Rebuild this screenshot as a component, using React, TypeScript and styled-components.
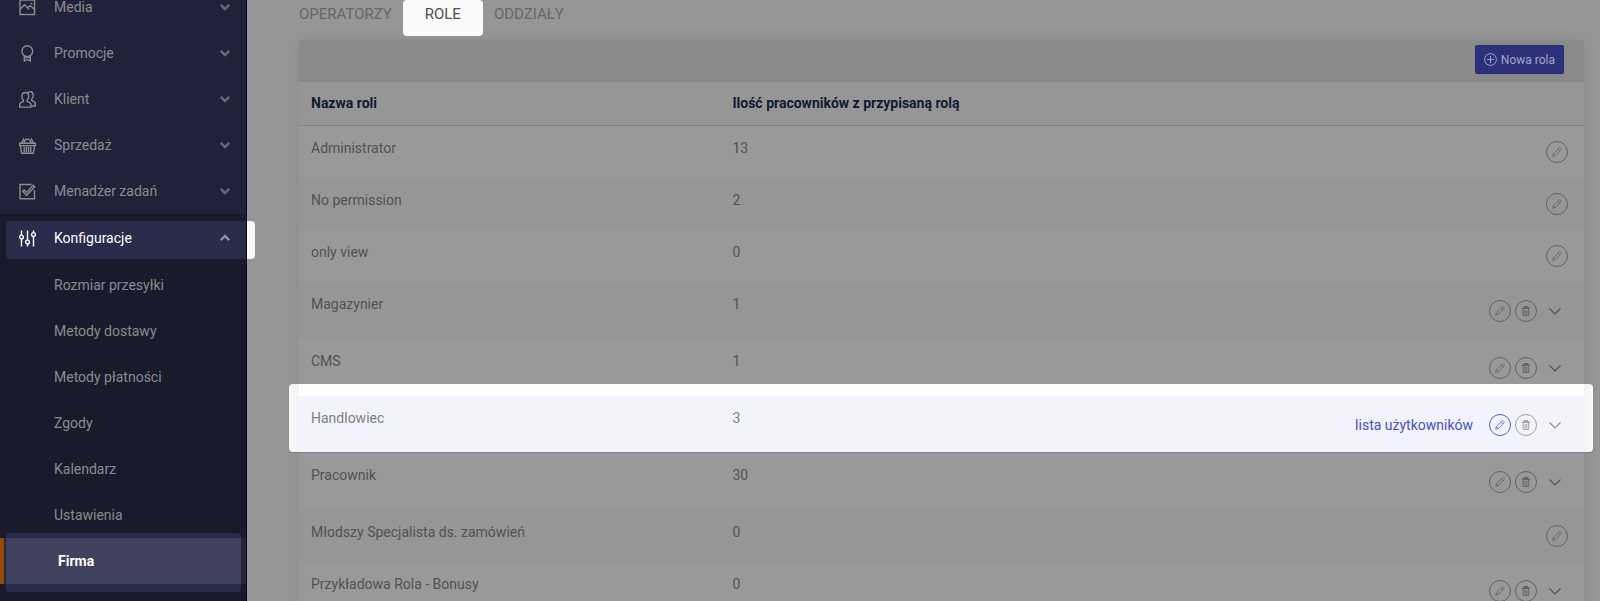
import React from "react";
import styled, { createGlobalStyle, css } from "styled-components";

const GlobalStyle = createGlobalStyle`
  *, *::before, *::after { box-sizing: border-box; }
  body {
    margin: 0;
    background: #969696;
    font-family: Roboto, "Liberation Sans", sans-serif;
    font-size: 14px;
    line-height: 20px;
  }
  button { font: inherit; border: 0; padding: 0; background: none; cursor: pointer; }
  a { text-decoration: none; }
  svg { display: block; flex: none; }
`;

/* ---------- layout ---------- */

const Shell = styled.div`
  display: grid;
  grid-template-columns: 247px minmax(0, 1fr);
  height: 100vh;
  overflow: hidden;
`;

const Sidebar = styled.aside`
  position: relative;
  z-index: 1;
  background: #202239;
  border-right: 1px solid #05052f;
`;

const Main = styled.main`
  padding: 0 16px 24px 52px;
`;

/* ---------- sidebar ---------- */

const Menu = styled.nav`
  margin-top: -16px;
  display: flex;
  flex-direction: column;
`;

const MenuButton = styled.button<{ $active?: boolean }>`
  position: relative;
  z-index: 0;
  display: flex;
  align-items: center;
  gap: 18px;
  width: 100%;
  height: 46px;
  padding: 0 16px 0 19px;
  text-align: left;
  color: ${(p) => (p.$active ? "#ffffff" : "#8b8c92")};

  ${(p) =>
    p.$active &&
    css`
      &::before {
        content: "";
        position: absolute;
        z-index: -1;
        inset: 6px -9px 2px 6px;
        border-radius: 4px;
        background: linear-gradient(to left, #fafafa 8px, #05052f 8px, #05052f 9px, #292c4b 9px);
      }
    `}
`;

const MenuLabel = styled.span`
  flex: 1;
`;

const MenuGroup = styled.div`
  padding: 1px 0 100vh;
  background: #191b2d;
`;

const SubMenu = styled.ul`
  list-style: none;
  margin: 0;
  padding: 1px 0 0;
`;

const SubLink = styled.a<{ $active?: boolean }>`
  position: relative;
  z-index: 0;
  display: flex;
  align-items: center;
  height: 46px;
  padding-left: 54px;
  color: #8b8b8d;

  ${(p) =>
    p.$active &&
    css`
      border-left: 4px solid #984c02;
      background: #26283a;
      color: #ffffff;
      font-weight: 700;

      &::before {
        content: "";
        position: absolute;
        z-index: -1;
        inset: -5px 5px -8px 2px;
        border-radius: 4px;
        background: linear-gradient(#292c4b 5px, #40425e 5px, #40425e 51px, #292c4b 51px);
      }
    `}
`;

/* ---------- tabs ---------- */

const Tabs = styled.nav`
  display: flex;
  gap: 11px;
  height: 36px;
  margin-bottom: 4px;
`;

const Tab = styled.a<{ $active?: boolean }>`
  padding: 4px ${(p) => (p.$active ? "22px" : "0")} 0;
  font-size: 15px;
  color: ${(p) => (p.$active ? "#505050" : "#676767")};
  background: ${(p) => (p.$active ? "#fafafa" : "transparent")};
  border-radius: 4px;
`;

/* ---------- table card ---------- */

const Card = styled.section`
  border-radius: 4px 4px 0 0;
  background: #999999;
  box-shadow: 0 0 14px rgba(60, 60, 70, 0.1);
`;

const Toolbar = styled.div`
  display: flex;
  justify-content: flex-end;
  align-items: flex-start;
  height: 42px;
  padding: 5px 20px 0;
  border-bottom: 2px solid #85858c;
  border-radius: 4px 4px 0 0;
  background: #8a8a8a;
`;

const NewRoleButton = styled.button`
  display: flex;
  align-items: center;
  gap: 4px;
  height: 29px;
  padding: 0 8px;
  border-radius: 2px;
  border: 1px solid #262b7b;
  background: #2c317a;
  color: #a3a5c0;
  font-size: 12px;
`;

const Table = styled.table`
  width: 100%;
  table-layout: fixed;
  border-collapse: separate;
  border-spacing: 0;
`;

const HeadCell = styled.th<{ $width?: string }>`
  width: ${(p) => p.$width ?? "auto"};
  height: 44px;
  padding: 0 12px 2px;
  text-align: left;
  font-weight: 700;
  color: #101a30;
  background: #969696;
  border-bottom: 1px solid #848488;
`;

const Cell = styled.td`
  padding: 12px 12px 0;
  vertical-align: top;
`;

const ActionCell = styled.td`
  padding: 0 16px 0 0;
  vertical-align: middle;
`;

const Row = styled.tr<{ $tall: boolean; $highlighted: boolean }>`
  height: ${(p) => (p.$tall ? "57px" : "52px")};
  color: #525252;

  &:nth-child(even) {
    background: #969696;
  }

  ${(p) =>
    p.$highlighted &&
    css`
      position: relative;
      z-index: 0;
      color: #808080;

      & > td:first-child::before {
        content: "";
        position: absolute;
        z-index: -1;
        inset: -12px -9px 1px -10px;
        border-radius: 4px;
        box-shadow: 0 1px 1px rgba(70, 70, 90, 0.3);
        background:
          linear-gradient(to right, #fafafa, #f3f3f3) left / 10px 100% no-repeat,
          linear-gradient(to left, #fafafa, #f3f3f3) right / 9px 100% no-repeat,
          linear-gradient(#ffffff 12px, #f2f3fc 12px);
      }
    `}
`;

const Actions = styled.div`
  display: flex;
  justify-content: flex-end;
  align-items: center;
  gap: 4px;
`;

const UsersLink = styled.a`
  margin-right: 12px;
  color: #4a4fc4;
`;

const CircleButton = styled.button<{ $tone: string }>`
  display: grid;
  place-items: center;
  width: 22px;
  height: 22px;
  border: 1px solid ${(p) => p.$tone};
  border-radius: 50%;
  color: ${(p) => p.$tone};
`;

const ExpandButton = styled.button<{ $tone: string }>`
  display: grid;
  place-items: center;
  width: 27px;
  height: 22px;
  color: ${(p) => p.$tone};
`;

/* ---------- icons ---------- */

const Glyph = ({ children }: { children: React.ReactNode }) => (
  <svg width="17" height="17" viewBox="0 0 17 17" fill="none" stroke="currentColor" strokeWidth="1.4" aria-hidden="true">
    {children}
  </svg>
);

const MediaIcon = () => (
  <Glyph>
    <rect x="1" y="1" width="14.500" height="14.500" />
    <path d="M1 10.500 5.600 5.800l4.600 4.600M8.600 8.800 11.300 6.600 15.500 10.500M12.500 5.200V3.800" />
  </Glyph>
);

const AwardIcon = () => (
  <Glyph>
    <circle cx="8.300" cy="6.200" r="5.400" />
    <path d="M5.300 11v5l3-1.700 3 1.700v-5M5.300 13l3-1.400 3 1.400" />
  </Glyph>
);

const PeopleIcon = () => (
  <Glyph>
    <path d="M6.300 1.500c2.100 0 3.400 1.500 3.400 3.700 0 1.700-.6 3-1.500 3.800v1.600l2.400 1.100c.9.400 1.300 1 1.300 2v2.400H.7v-2.400c0-1 .5-1.600 1.300-2l2.400-1.100V9C3.500 8.200 2.900 6.900 2.900 5.200c0-2.200 1.300-3.700 3.400-3.700z" />
    <path d="M8.300 2c.6-.8 1.500-1.300 2.600-1.300 2 0 3.300 1.400 3.300 3.600 0 1.700-.6 3-1.500 3.700v1.500l2.400 1.100c.8.400 1.200 1 1.200 1.900v2.500h-4" />
  </Glyph>
);

const BasketIcon = () => (
  <Glyph>
    <path d="M.7 6.200h15.600v2.400H.7zM1.400 8.600l1.200 7.600h11.800l1.200-7.600M2.800 6 4.800 1.200M14.200 6l-2-4.800M5 5.500c.5-2.300 1.800-3.400 3.500-3.400s3 1.100 3.500 3.400" />
    <path d="M5.200 9.500v6M7.400 9.500v6M9.600 9.500v6M11.800 9.500v6" />
  </Glyph>
);

const TaskIcon = () => (
  <Glyph>
    <path d="M15.500 7v8.800H1V1.500h11.500" />
    <path d="M3.600 8.300 5.100 6.900l2.500 2.500 6.600-7.200 1.500 1.500-8.100 8.700z" />
  </Glyph>
);

const SlidersIcon = () => (
  <Glyph>
    <path d="M2.500.5V5M2.500 9v7.500M8.500.5V10M8.500 14v2.500M14.500.5V2.500M14.500 6.500v10" />
    <circle cx="2.500" cy="7" r="1.900" />
    <circle cx="8.500" cy="12" r="1.900" />
    <circle cx="14.500" cy="4.500" r="1.900" />
  </Glyph>
);

const MenuChevron = ({ up }: { up?: boolean }) => (
  <svg width="10" height="8" viewBox="0 0 10 8" fill="none" stroke={up ? "#8d8fa2" : "#696a78"} strokeWidth="2.400" aria-hidden="true">
    <path d={up ? "M.8 6.200 5 2l4.200 4.200" : "M.8 1.800 5 6l4.200-4.200"} />
  </svg>
);

const PlusCircleIcon = () => (
  <svg width="13" height="13" viewBox="0 0 13 13" fill="none" stroke="currentColor" aria-hidden="true">
    <circle cx="6.500" cy="6.500" r="5.900" />
    <path d="M6.500 3v7M3 6.500h7" />
  </svg>
);

const PencilIcon = () => (
  <svg width="10" height="10" viewBox="0 0 10 10" fill="none" stroke="currentColor" strokeWidth=".8" aria-hidden="true">
    <path d="M.7 9.300 1.400 6.700 6.900 1.200c.5-.5 1.100-.5 1.500 0l.4.400c.5.500.5 1 0 1.500L3.300 8.600zM6 2.100 7.900 4M1.400 6.700l1.900 1.900" />
  </svg>
);

const TrashIcon = () => (
  <svg width="10" height="10" viewBox="0 0 10 10" fill="none" stroke="currentColor" aria-hidden="true">
    <path d="M1 2.300h8M3.500 1.800V.6h3v1.200" strokeWidth="1.400" />
    <path d="M2.200 3v6.400h5.600V3" />
    <path d="M4.200 4v4.500M5.800 4v4.500" strokeWidth=".9" />
  </svg>
);

const ExpandIcon = () => (
  <svg width="12" height="8" viewBox="0 0 12 8" fill="none" stroke="currentColor" strokeWidth="1.100" aria-hidden="true">
    <path d="M.5 1.500 6 7l5.500-5.500" />
  </svg>
);

/* ---------- data ---------- */

const menu = [
  { label: "Media", Icon: MediaIcon },
  { label: "Promocje", Icon: AwardIcon },
  { label: "Klient", Icon: PeopleIcon },
  { label: "Sprzedaż", Icon: BasketIcon },
  { label: "Menadżer zadań", Icon: TaskIcon },
];

const subMenu = [
  "Rozmiar przesyłki",
  "Metody dostawy",
  "Metody płatności",
  "Zgody",
  "Kalendarz",
  "Ustawienia",
  "Firma",
];

interface Role {
  name: string;
  count: number;
  editable?: boolean;
  highlighted?: boolean;
}

const roles: Role[] = [
  { name: "Administrator", count: 13 },
  { name: "No permission", count: 2 },
  { name: "only view", count: 0 },
  { name: "Magazynier", count: 1, editable: true },
  { name: "CMS", count: 1, editable: true },
  { name: "Handlowiec", count: 3, editable: true, highlighted: true },
  { name: "Pracownik", count: 30, editable: true },
  { name: "Młodszy Specjalista ds. zamówień", count: 0 },
  { name: "Przykładowa Rola - Bonusy", count: 0, editable: true },
];

const RoleRow = ({ name, count, editable = false, highlighted = false }: Role) => {
  const tone = highlighted ? "#a2a2a6" : "#626262";
  return (
    <Row $tall={editable} $highlighted={highlighted}>
      <Cell>{name}</Cell>
      <Cell>{count}</Cell>
      <ActionCell>
        <Actions>
          {highlighted && <UsersLink href="#users">lista użytkowników</UsersLink>}
          <CircleButton $tone={highlighted ? "#5a5fd0" : tone} aria-label={`Edytuj: ${name}`}>
            <PencilIcon />
          </CircleButton>
          {editable && (
            <>
              <CircleButton $tone={tone} aria-label={`Usuń: ${name}`}>
                <TrashIcon />
              </CircleButton>
              <ExpandButton $tone={highlighted ? "#8c8c90" : "#505050"} aria-label={`Rozwiń: ${name}`}>
                <ExpandIcon />
              </ExpandButton>
            </>
          )}
        </Actions>
      </ActionCell>
    </Row>
  );
};

export default function App() {
  return (
    <>
      <GlobalStyle />
      <Shell>
        <Sidebar>
          <Menu aria-label="Menu">
            {menu.map(({ label, Icon }) => (
              <MenuButton key={label}>
                <Icon />
                <MenuLabel>{label}</MenuLabel>
                <MenuChevron />
              </MenuButton>
            ))}
            <MenuGroup>
              <MenuButton $active aria-expanded="true">
                <SlidersIcon />
                <MenuLabel>Konfiguracje</MenuLabel>
                <MenuChevron up />
              </MenuButton>
              <SubMenu>
                {subMenu.map((label) => (
                  <li key={label}>
                    <SubLink href="#" $active={label === "Firma"}>
                      {label}
                    </SubLink>
                  </li>
                ))}
              </SubMenu>
            </MenuGroup>
          </Menu>
        </Sidebar>
        <Main>
          <Tabs aria-label="Firma">
            <Tab href="#operatorzy">OPERATORZY</Tab>
            <Tab href="#role" $active aria-current="page">
              ROLE
            </Tab>
            <Tab href="#oddzialy">ODDZIAŁY</Tab>
          </Tabs>
          <Card>
            <Toolbar>
              <NewRoleButton>
                <PlusCircleIcon />
                Nowa rola
              </NewRoleButton>
            </Toolbar>
            <Table>
              <thead>
                <tr>
                  <HeadCell scope="col" $width="32.8%">Nazwa roli</HeadCell>
                  <HeadCell scope="col" $width="32.8%">Ilość pracowników z przypisaną rolą</HeadCell>
                  <HeadCell aria-label="Akcje" />
                </tr>
              </thead>
              <tbody>
                {roles.map((role) => (
                  <RoleRow key={role.name} {...role} />
                ))}
              </tbody>
            </Table>
          </Card>
        </Main>
      </Shell>
    </>
  );
}
